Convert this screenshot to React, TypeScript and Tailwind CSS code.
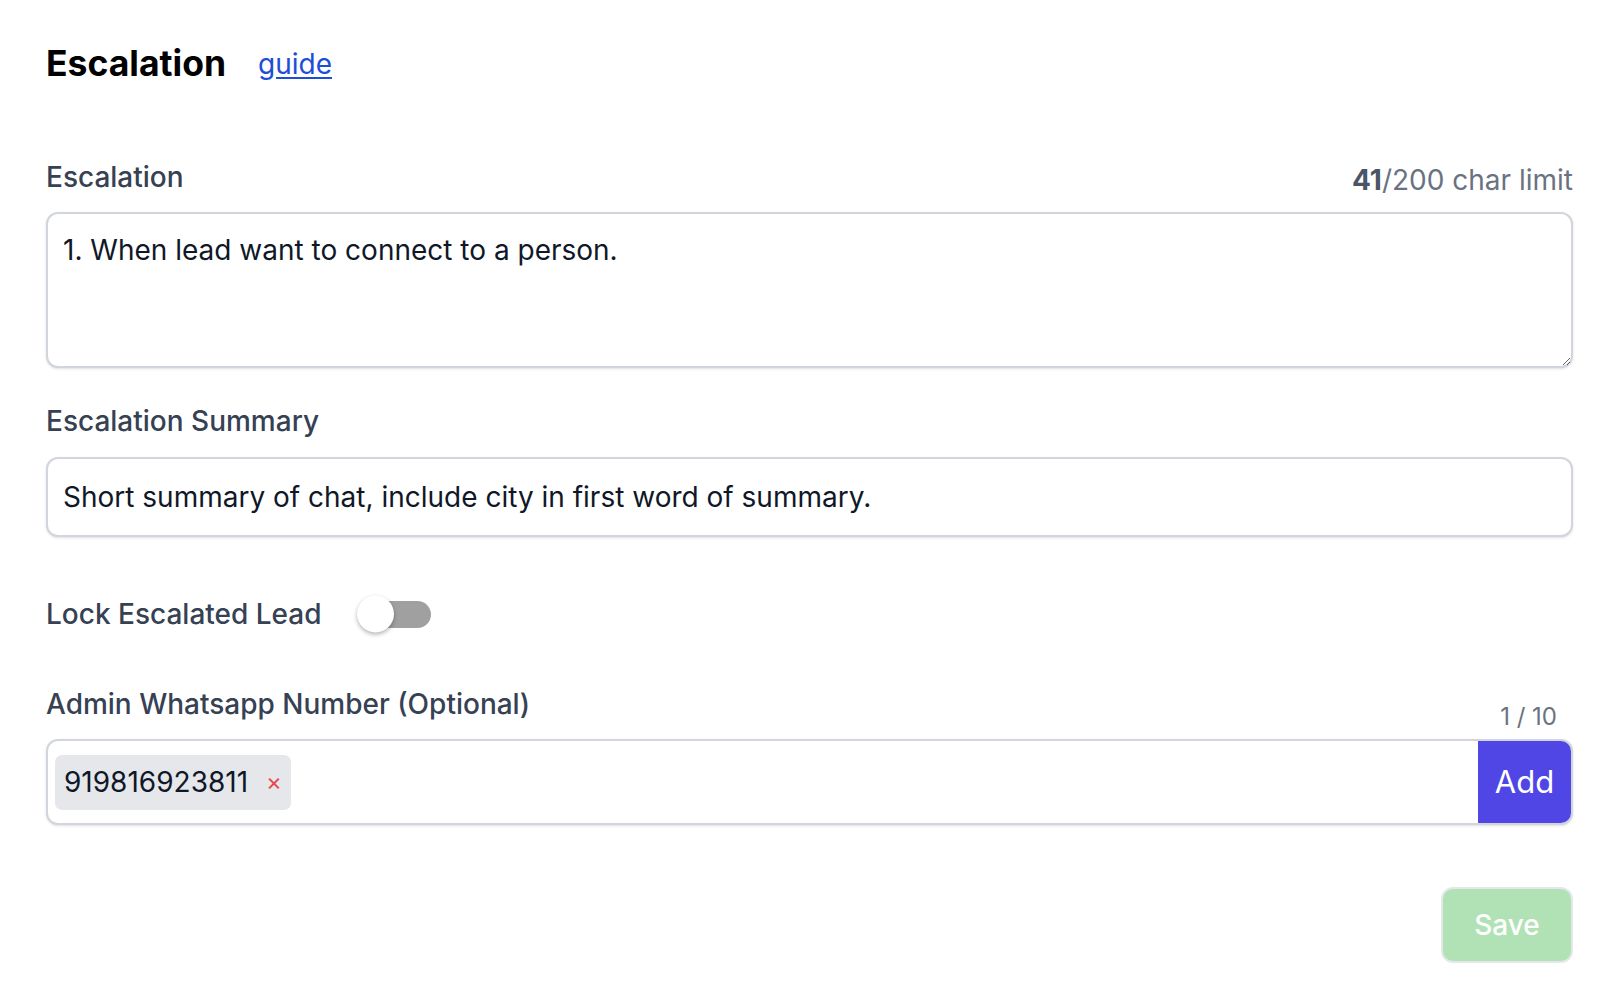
import React, { useState } from 'react';

export default function App() {
  const [escalation, setEscalation] = useState('1. When lead want to connect to a person.');
  const [summary, setSummary] = useState('Short summary of chat, include city in first word of summary.');
  const [locked, setLocked] = useState(false);
  const [numbers, setNumbers] = useState<string[]>(['919816923811']);
  const [draft, setDraft] = useState('');

  const addNumber = () => {
    if (!draft.trim() || numbers.length >= 10) return;
    setNumbers([...numbers, draft.trim()]);
    setDraft('');
  };

  return (
    <div className="min-h-screen bg-white pl-[46px] pr-[39px] pt-[42px] font-['Inter',sans-serif] text-gray-900">
      {/* header */}
      <div className="flex items-center gap-[32px]">
        <h1 className="text-[35.5px] leading-[44px] font-bold text-black">Escalation</h1>
        <a href="#" className="text-[28px] leading-[44px] text-[#1d4ed8] underline underline-offset-[3px]">
          guide
        </a>
      </div>

      {/* escalation */}
      <div className="mt-[71px] flex items-end justify-between">
        <label className="text-[28px] leading-[40px] font-medium text-gray-700">Escalation</label>
        <span className="text-[28px] leading-[34px] text-gray-500">
          <span className="font-bold text-gray-600">{escalation.length}</span>/200 char limit
        </span>
      </div>
      <textarea
        value={escalation}
        onChange={(e) => setEscalation(e.target.value)}
        maxLength={200}
        className="mt-[15px] block h-[156px] w-full rounded-[12px] border-2 border-gray-300 bg-white px-[15px] pt-[16px] pb-[12px] text-[28px] leading-[40px] text-gray-900 shadow-sm outline-none"
      />

      {/* summary */}
      <label className="mt-[33px] block text-[28px] leading-[40px] font-medium text-gray-700">
        Escalation Summary
      </label>
      <input
        value={summary}
        onChange={(e) => setSummary(e.target.value)}
        className="mt-[16px] block h-[80px] w-full rounded-[12px] border-2 border-gray-300 bg-white px-[15px] text-[28px] text-gray-900 shadow-sm outline-none"
      />

      {/* lock toggle */}
      <div className="mt-[57px] flex h-[40px] items-center gap-[41px]">
        <span className="text-[28px] leading-[40px] font-medium text-gray-700">Lock Escalated Lead</span>
        <button
          type="button"
          onClick={() => setLocked(!locked)}
          className="relative h-[27px] w-[68px] rounded-full bg-[#a0a0a0]"
        >
          <span
            className={
              locked
                ? 'absolute top-1/2 left-[32px] h-[37px] w-[37px] -translate-y-1/2 rounded-full bg-white shadow-[0_2px_4px_rgba(0,0,0,0.3)]'
                : 'absolute top-1/2 left-[-6px] h-[37px] w-[37px] -translate-y-1/2 rounded-full bg-white shadow-[0_2px_4px_rgba(0,0,0,0.3)]'
            }
          />
        </button>
      </div>

      {/* admin numbers */}
      <div className="mt-[50px] flex items-start justify-between">
        <label className="text-[28px] leading-[40px] font-medium text-gray-700">Admin Whatsapp Number (Optional)</label>
        <span className="mt-[17px] pr-[16px] text-[24px] leading-[32px] text-gray-500">{numbers.length} / 10</span>
      </div>
      <div className="mt-[6px] flex h-[86px] w-full overflow-hidden rounded-[12px] border-2 border-gray-300 bg-white shadow-sm">
        <div className="flex flex-1 items-center gap-2 pl-[7px]">
          {numbers.map((n) => (
            <span key={n} className="flex h-[55px] items-center gap-[18px] rounded-[7px] bg-gray-200 pl-[9px] pr-[9px] text-[28px] text-gray-900">
              {n}
              <button
                type="button"
                onClick={() => setNumbers(numbers.filter((x) => x !== n))}
                className="text-[24px] leading-none text-[#e5484d]"
              >
                ×
              </button>
            </span>
          ))}
          <input
            value={draft}
            onChange={(e) => setDraft(e.target.value)}
            className="h-full flex-1 bg-transparent text-[28px] outline-none"
          />
        </div>
        <button type="button" onClick={addNumber} className="w-[93px] bg-[#4f46e5] text-[31px] text-white">
          Add
        </button>
      </div>

      {/* save */}
      <div className="mt-[62px] flex justify-end">
        <button
          type="button"
          disabled
          className="h-[76px] w-[132px] rounded-[12px] border-2 border-gray-200 bg-[#b1e2b6] text-[28px] font-medium text-white"
        >
          Save
        </button>
      </div>
    </div>
  );
}
